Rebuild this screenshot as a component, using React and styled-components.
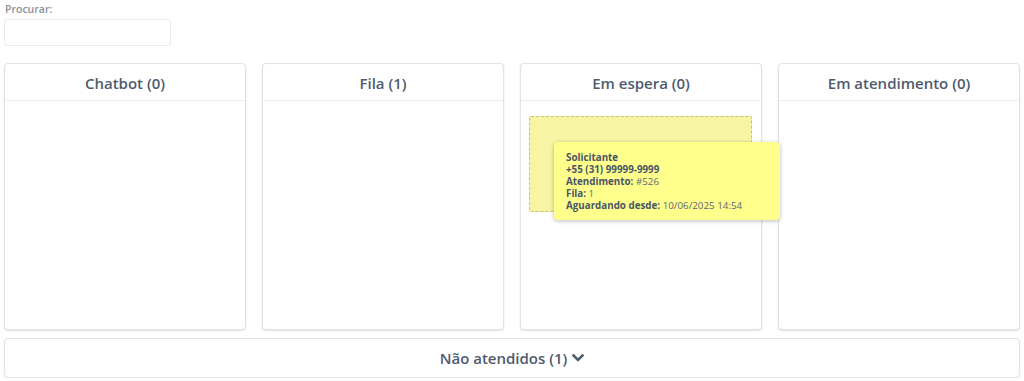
import React from "react";
import styled, { createGlobalStyle } from "styled-components";

const Global = createGlobalStyle`
  html, body { margin: 0; padding: 0; background: #fff; }
  body { font-family: "Open Sans", "Noto Sans", sans-serif; }
  * { box-sizing: border-box; }
`;

const Page = styled.div`
  padding: 0 4px 0 4px;
  width: 1024px;
`;

const SearchBlock = styled.div`
  display: flex;
  flex-direction: column;
  padding-top: 2px;
`;

const Label = styled.label`
  font-size: 10.5px;
  font-weight: 600;
  color: #8b9099;
  padding-left: 1px;
  line-height: 14px;
`;

const SearchInput = styled.input`
  margin-top: 3px;
  width: 167px;
  height: 27px;
  border: 1px solid #ebebeb;
  border-radius: 3px;
  outline: none;
  background: #fff;
`;

const Board = styled.div`
  display: grid;
  grid-template-columns: repeat(4, 242px);
  column-gap: 16px;
  margin-top: 17px;
`;

const Column = styled.div`
  height: 267px;
  border: 1px solid #e2e2e2;
  border-radius: 4px;
  box-shadow: 0 1px 2px rgba(0, 0, 0, 0.12);
  display: flex;
  flex-direction: column;
  background: #fff;
`;

const ColumnHeader = styled.div`
  height: 37px;
  border-bottom: 1px solid #ececec;
  display: flex;
  align-items: center;
  justify-content: center;
  font-size: 15px;
  font-weight: 600;
  color: #4e5b6f;
  padding-top: 2px;
`;

const ColumnBody = styled.div`
  position: relative;
  flex: 1;
  padding: 15px 9px 0 8px;
`;

const Placeholder = styled.div`
  height: 96px;
  border: 1px dashed #c6c27e;
  border-radius: 2px;
  background: #f7f5a4;
`;

const DragCard = styled.div`
  position: absolute;
  left: 33px;
  top: 41px;
  width: 226px;
  height: 78px;
  background: #ffff8c;
  border-radius: 4px;
  box-shadow: 0 1px 4px rgba(0, 0, 0, 0.28);
  padding: 10px 12px 0 12px;
  font-size: 9.8px;
  line-height: 12px;
  color: #5f6672;
  z-index: 2;
`;

const CardLine = styled.div`
  white-space: nowrap;
`;

const Key = styled.span`
  font-weight: 700;
  color: #4b5568;
`;

const Footer = styled.div`
  margin-top: 8px;
  width: 1016px;
  height: 40px;
  border: 1px solid #e2e2e2;
  border-radius: 4px;
  box-shadow: 0 1px 2px rgba(0, 0, 0, 0.12);
  display: flex;
  align-items: center;
  justify-content: center;
  gap: 5px;
  font-size: 15px;
  font-weight: 600;
  color: #4e5b6f;
`;

const Chevron = () => (
  <svg width="12" height="10" viewBox="0 0 12 10">
    <path d="M1.5 2.5 L6 7 L10.5 2.5" fill="none" stroke="#4e5b6f" strokeWidth="2.6" strokeLinecap="square" />
  </svg>
);

const columns = ["Chatbot (0)", "Fila (1)", "Em espera (0)", "Em atendimento (0)"];

export default function App() {
  return (
    <>
      <Global />
      <Page>
        <SearchBlock>
          <Label>Procurar:</Label>
          <SearchInput />
        </SearchBlock>
        <Board>
          {columns.map((c, i) => (
            <Column key={c}>
              <ColumnHeader>{c}</ColumnHeader>
              <ColumnBody>
                {i === 2 && (
                  <>
                    <Placeholder />
                    <DragCard>
                      <CardLine><Key>Solicitante</Key></CardLine>
                      <CardLine><Key>+55 (31) 99999-9999</Key></CardLine>
                      <CardLine><Key>Atendimento:</Key> #526</CardLine>
                      <CardLine><Key>Fila:</Key> 1</CardLine>
                      <CardLine><Key>Aguardando desde:</Key> 10/06/2025 14:54</CardLine>
                    </DragCard>
                  </>
                )}
              </ColumnBody>
            </Column>
          ))}
        </Board>
        <Footer>
          <span>Não atendidos (1)</span>
          <Chevron />
        </Footer>
      </Page>
    </>
  );
}
